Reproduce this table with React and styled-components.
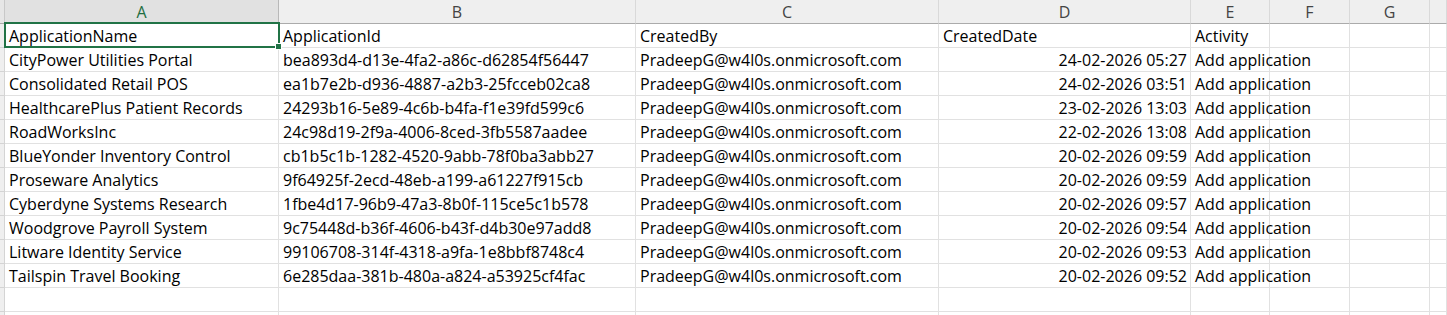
import React from "react";
import styled, { createGlobalStyle } from "styled-components";

const GlobalStyle = createGlobalStyle`
  html, body {
    margin: 0;
    padding: 0;
    background: #ffffff;
    overflow: hidden;
  }
`;

const COLS = [
  { key: "A", width: 274 },
  { key: "B", width: 357 },
  { key: "C", width: 303 },
  { key: "D", width: 252 },
  { key: "E", width: 79 },
  { key: "F", width: 80 },
  { key: "G", width: 80 },
];

const Sheet = styled.div`
  display: grid;
  grid-template-columns: 5px ${COLS.map((c) => c.width + "px").join(" ")} 1fr;
  grid-auto-rows: 24px;
  width: 1447px;
  height: 315px;
  overflow: hidden;
  font-family: "Open Sans", "Noto Sans", sans-serif;
  font-size: 16px;
  color: #000;
`;

const Corner = styled.div`
  background: #e6e6e6;
  border-right: 1px solid #c8c8c8;
  border-bottom: 1px solid #ababab;
`;

const ColHead = styled.div`
  display: flex;
  align-items: center;
  justify-content: center;
  background: ${(p) => (p.active ? "#e1e1e1" : "#efefef")};
  color: ${(p) => (p.active ? "#1e6e42" : "#444")};
  border-right: 1px solid ${(p) => (p.active ? "#b8b8b8" : "#d9d9d9")};
  border-bottom: ${(p) => (p.active ? "2px solid #217346" : "1px solid #ababab")};
  font-size: 16px;
  line-height: 1;
  padding-top: 1px;
`;

const RowHead = styled.div`
  background: #efefef;
  border-right: 1px solid #d4d4d4;
  border-bottom: 1px solid #d4d4d4;
`;

const Cell = styled.div`
  position: relative;
  display: flex;
  align-items: center;
  justify-content: ${(p) => (p.right ? "flex-end" : "flex-start")};
  padding: 0 ${(p) => (p.right ? "3px" : "0")} 0 ${(p) => (p.right ? "0" : "4px")};
  border-right: 1px solid #e1e1e1;
  border-bottom: 1px solid #e1e1e1;
  white-space: nowrap;
  overflow: visible;
  line-height: 1;
  z-index: ${(p) => (p.selected ? 2 : 1)};

  ${(p) =>
    p.selected &&
    `
    &::after {
      content: "";
      position: absolute;
      left: -1px;
      top: -2px;
      right: -2px;
      bottom: -1px;
      border: 2px solid #217346;
      pointer-events: none;
    }
    &::before {
      content: "";
      position: absolute;
      right: -4px;
      bottom: -3px;
      width: 5px;
      height: 5px;
      background: #217346;
      border: 1px solid #fff;
      z-index: 3;
    }
  `}
`;

const rows = [
  ["ApplicationName", "ApplicationId", "CreatedBy", "CreatedDate", "Activity"],
  ["CityPower Utilities Portal", "bea893d4-d13e-4fa2-a86c-d62854f56447", "24-02-2026 05:27"],
  ["Consolidated Retail POS", "ea1b7e2b-d936-4887-a2b3-25fcceb02ca8", "24-02-2026 03:51"],
  ["HealthcarePlus Patient Records", "24293b16-5e89-4c6b-b4fa-f1e39fd599c6", "23-02-2026 13:03"],
  ["RoadWorksInc", "24c98d19-2f9a-4006-8ced-3fb5587aadee", "22-02-2026 13:08"],
  ["BlueYonder Inventory Control", "cb1b5c1b-1282-4520-9abb-78f0ba3abb27", "20-02-2026 09:59"],
  ["Proseware Analytics", "9f64925f-2ecd-48eb-a199-a61227f915cb", "20-02-2026 09:59"],
  ["Cyberdyne Systems Research", "1fbe4d17-96b9-47a3-8b0f-115ce5c1b578", "20-02-2026 09:57"],
  ["Woodgrove Payroll System", "9c75448d-b36f-4606-b43f-d4b30e97add8", "20-02-2026 09:54"],
  ["Litware Identity Service", "99106708-314f-4318-a9fa-1e8bbf8748c4", "20-02-2026 09:53"],
  ["Tailspin Travel Booking", "6e285daa-381b-480a-a824-a53925cf4fac", "20-02-2026 09:52"],
];

const EMAIL = "PradeepG@w4l0s.onmicrosoft.com";

function toCells(row, i) {
  if (i === 0) return [...row, "", ""];
  return [row[0], row[1], EMAIL, row[2], "Add application", "", ""];
}

export default function App() {
  const body = rows.map(toCells);
  // two empty rows below the data
  body.push(["", "", "", "", "", "", ""], ["", "", "", "", "", "", ""]);

  return (
    <>
      <GlobalStyle />
      <Sheet>
        <Corner />
        {COLS.map((c) => (
          <ColHead key={c.key} active={c.key === "A"}>
            {c.key}
          </ColHead>
        ))}
        <ColHead />
        {body.map((cells, r) => (
          <React.Fragment key={r}>
            <RowHead />
            {cells.map((v, c) => (
              <Cell key={c} right={r > 0 && c === 3} selected={r === 0 && c === 0}>
                {v}
              </Cell>
            ))}
            <Cell />
          </React.Fragment>
        ))}
      </Sheet>
    </>
  );
}
